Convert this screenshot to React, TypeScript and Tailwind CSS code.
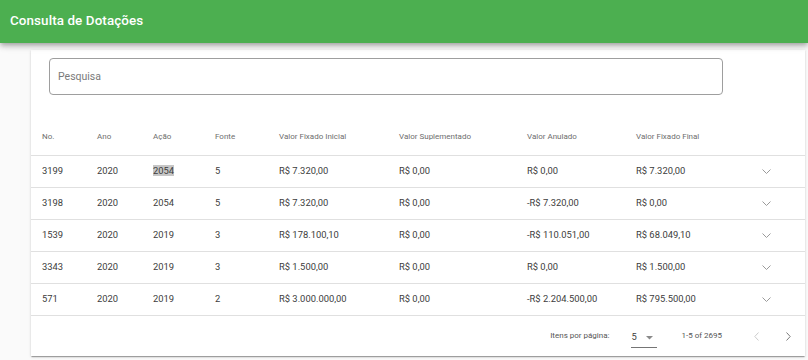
import React from "react";

const rows = [
  ["3199", "2020", "2054", "5", "R$ 7.320,00", "R$ 0,00", "R$ 0,00", "R$ 7.320,00"],
  ["3198", "2020", "2054", "5", "R$ 7.320,00", "R$ 0,00", "-R$ 7.320,00", "R$ 0,00"],
  ["1539", "2020", "2019", "3", "R$ 178.100,10", "R$ 0,00", "-R$ 110.051,00", "R$ 68.049,10"],
  ["3343", "2020", "2019", "3", "R$ 1.500,00", "R$ 0,00", "R$ 0,00", "R$ 1.500,00"],
  ["571", "2020", "2019", "2", "R$ 3.000.000,00", "R$ 0,00", "-R$ 2.204.500,00", "R$ 795.500,00"],
];

const headers = [
  "No.",
  "Ano",
  "Ação",
  "Fonte",
  "Valor Fixado Inicial",
  "Valor Suplementado",
  "Valor Anulado",
  "Valor Fixado Final",
];

const grid = "grid grid-cols-[55px_56px_62px_64px_120px_128px_109px_125px_1fr] pl-[11px] items-center";

function Chevron() {
  return (
    <svg width="9" height="5" viewBox="0 0 9 5" className="block">
      <polyline points="0.5,0.5 4.5,4.5 8.5,0.5" fill="none" stroke="#9a9a9a" strokeWidth="1" />
    </svg>
  );
}

export default function App() {
  return (
    <div className="w-[808px] h-[360px] bg-[#fafafa] overflow-hidden" style={{ fontFamily: "Roboto, 'Liberation Sans', sans-serif" }}>
      <div className="h-[43px] bg-[#4caf50] flex items-center pl-[10px] shadow-[0_2px_4px_-1px_rgba(0,0,0,0.2),0_4px_5px_0_rgba(0,0,0,0.14),0_1px_10px_0_rgba(0,0,0,0.12)] relative z-10">
        <span className="text-white text-[13.4px] font-medium tracking-[0.1px]">Consulta de Dotações</span>
      </div>
      <div className="ml-[31px] mr-[3px] mt-[7px] bg-white shadow-[0_2px_1px_-1px_rgba(0,0,0,0.2),0_1px_1px_0_rgba(0,0,0,0.14),0_1px_3px_0_rgba(0,0,0,0.12)]">
        <div className="pt-[8px] pl-[18px]">
          <div className="w-[674px] h-[37px] border border-[#9e9e9e] rounded-[4px] flex items-center pl-[8px]">
            <span className="text-[10.5px] text-[#7a7a7a]">Pesquisa</span>
          </div>
        </div>
        <div className="mt-[24px]">
          <div className={`${grid} h-[37px] border-b border-[#e0e0e0] text-[8px] text-[#6e6e6e]`}>
            {headers.map((h) => (
              <div key={h}>{h}</div>
            ))}
            <div />
          </div>
          {rows.map((r, i) => (
            <div key={i} className={`${grid} h-[32px] border-b border-[#e0e0e0] text-[9.4px] text-[#3c3c3c]`}>
              {r.map((c, j) => (
                <div key={j}>
                  {i === 0 && j === 2 ? <span className="bg-[#c6c6c6]">{c}</span> : c}
                </div>
              ))}
              <div className="pl-[1px]">
                <Chevron />
              </div>
            </div>
          ))}
          <div className="h-[40px] flex items-center justify-end text-[8px] text-[#555555] pr-[1px]">
            <span>Itens por página:</span>
            <div className="ml-[21px] w-[26px] h-[20px] border-b border-[#757575] flex items-center pl-[1px] mt-[4px]">
              <span className="text-[9.4px] text-[#3c3c3c]">5</span>
              <svg width="7" height="4" viewBox="0 0 7 4" className="ml-[9px]">
                <polygon points="0,0 7,0 3.5,3.5" fill="#8a8a8a" />
              </svg>
            </div>
            <span className="ml-[25px]">1-5 of 2695</span>
            <div className="ml-[18px] w-[32px] h-[32px] flex items-center justify-center">
              <svg width="5" height="9" viewBox="0 0 5 9">
                <polyline points="4.5,0.5 0.8,4.5 4.5,8.5" fill="none" stroke="#cccccc" strokeWidth="1" />
              </svg>
            </div>
            <div className="w-[32px] h-[32px] flex items-center justify-center">
              <svg width="5" height="9" viewBox="0 0 5 9">
                <polyline points="0.5,0.5 4.2,4.5 0.5,8.5" fill="none" stroke="#7a7a7a" strokeWidth="1" />
              </svg>
            </div>
          </div>
        </div>
      </div>
    </div>
  );
}
